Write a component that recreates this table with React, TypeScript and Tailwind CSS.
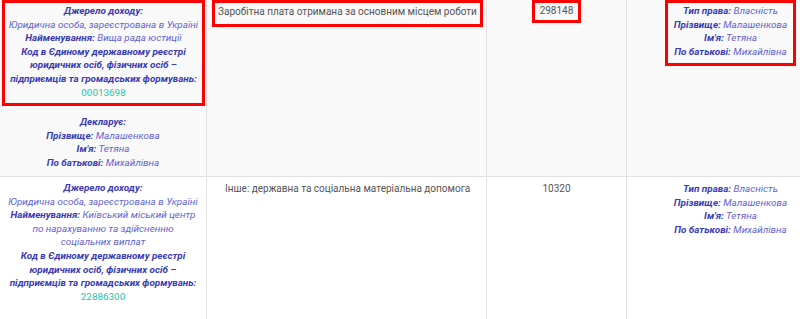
import React from 'react';

const L = 'font-bold italic text-[#3b3bb3]';
const V = 'italic text-[#6363d0]';
const CODE = 'text-[#1fc6ad]';

const Field: React.FC<{ label: string; value?: string }> = ({ label, value }) => (
  <div>
    <span className={L}>{label}</span>
    {value && <span className={V}> {value}</span>}
  </div>
);

const Owner: React.FC = () => (
  <>
    <Field label="Тип права:" value="Власність" />
    <Field label="Прізвище:" value="Малашенкова" />
    <Field label="Ім'я:" value="Тетяна" />
    <Field label="По батькові:" value="Михайлівна" />
  </>
);

const Source: React.FC<{ name: React.ReactNode; code: string }> = ({ name, code }) => (
  <>
    <div className={L}>Джерело доходу:</div>
    <div className={V}>Юридична особа, зареєстрована в Україні</div>
    <div>
      <span className={L}>Найменування:</span>
      <span className={V}> {name}</span>
    </div>
    <div className={L}>
      Код в Єдиному державному реєстрі юридичних осіб, фізичних осіб – підприємців та громадських формувань:
    </div>
    <div className={CODE}>{code}</div>
  </>
);

export default function App() {
  return (
    <div
      className="w-[800px] h-[319px] overflow-hidden bg-white text-[9.9px] leading-[13.6px]"
      style={{ fontFamily: 'Roboto, "Noto Sans", sans-serif' }}
    >
      <div className="w-[834px]">
        {/* Row 1 */}
        <div className="flex bg-[#f9f9f9] border-b border-[#e2e2e2] h-[177px]">
          <div className="w-[207px] shrink-0 border-r border-[#e2e2e2] text-center">
            <div className="mx-[2px] w-[203px] border-[3px] border-[#ff0000] pt-[1px] pb-[4px]">
              <Source name="Вища рада юстиції" code="00013698" />
            </div>
            <div className="mt-[9px]">
              <div className={L}>Декларує:</div>
              <Field label="Прізвище:" value="Малашенкова" />
              <Field label="Ім'я:" value="Тетяна" />
              <Field label="По батькові:" value="Михайлівна" />
            </div>
          </div>
          <div className="w-[280px] shrink-0 border-r border-[#e2e2e2] px-[5px]">
            <div className="w-[271px] h-[27px] border-[3px] border-[#ff0000] px-[3px] pt-[2px] text-[#555] text-[10px] whitespace-nowrap">
              Заробітна плата отримана за основним місцем роботи
            </div>
          </div>
          <div className="w-[140px] shrink-0 border-r border-[#e2e2e2] flex justify-center">
            <div className="h-[23px] self-start border-[3px] border-[#ff0000] px-[5px] pt-[1px] text-[#555] text-[10px]">
              298148
            </div>
          </div>
          <div className="w-[207px] shrink-0 flex justify-center">
            <div className="self-start text-center border-[3px] border-[#ff0000] px-[6px] pt-[1px] pb-[5px]">
              <Owner />
            </div>
          </div>
        </div>

        {/* Row 2 */}
        <div className="flex bg-white h-[160px]">
          <div className="w-[207px] shrink-0 border-r border-[#e2e2e2] text-center pt-[4px] px-[6px]">
            <Source
              name={<>Київський міський центр<br />по нарахуванню та здійсненню<br />соціальних виплат</>}
              code="22886300"
            />
          </div>
          <div className="w-[280px] shrink-0 border-r border-[#e2e2e2] pl-[18px] pt-[5px] text-[#555] text-[10px]">
            Інше: державна та соціальна матеріальна допомога
          </div>
          <div className="w-[140px] shrink-0 border-r border-[#e2e2e2] text-center pt-[5px] text-[#555] text-[10px]">
            10320
          </div>
          <div className="w-[207px] shrink-0 text-center pt-[5px]">
            <Owner />
          </div>
        </div>
      </div>
    </div>
  );
}
